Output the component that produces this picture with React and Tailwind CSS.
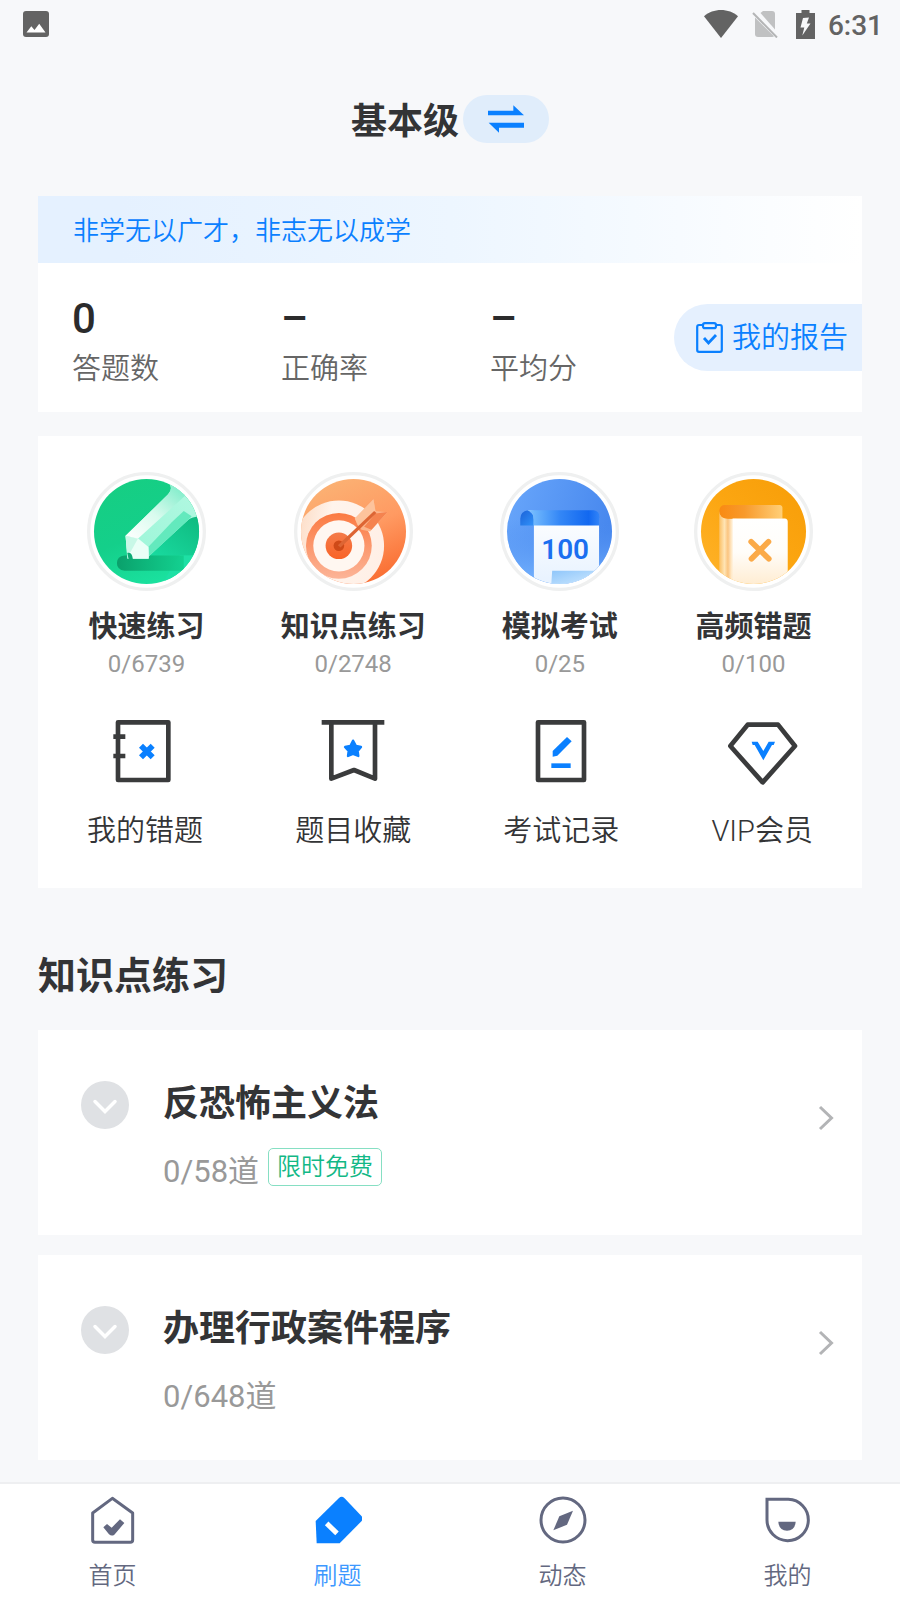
import React from "react";

function ImageIcon() {
  return (
    <svg className="size-[26px]" viewBox="0 0 26 26" aria-hidden="true">
      <rect width="26" height="26" rx="3" fill="#636363" />
      <path d="M3.5 21.5 L8.3 15.2 L11.5 19 L16.2 12.8 L22.5 21.5 Z" fill="#fff" />
    </svg>
  );
}

function WifiIcon() {
  return (
    <svg className="h-[28px] w-[34px]" viewBox="0 0 34 28" aria-hidden="true">
      <path d="M0 6.3 C9 -2 25 -2 34 6.3 L17 28 Z" fill="#636363" />
    </svg>
  );
}

function NoSimIcon() {
  return (
    <svg className="h-[28px] w-[26px]" viewBox="0 0 26 28" aria-hidden="true">
      <path d="M8.5 3 L11 1 H20 Q23 1 23 4 V19.5 Z" fill="#c0c1c2" />
      <path d="M3 7.5 L22 26.3 Q21.500 27 20 27 H6 Q3 27 3 24 Z" fill="#c0c1c2" />
      <path d="M1 3 L25 27.500" stroke="#b4b5b6" strokeWidth="2" />
    </svg>
  );
}

function BatteryIcon() {
  return (
    <svg className="h-[29px] w-[19px]" viewBox="0 0 19 29" aria-hidden="true">
      <path d="M5.500 0 H13.500 V3 H19 V29 H0 V3 H5.500 Z" fill="#636363" />
      <path d="M7 8 L13 7.500 L10.800 13.500 H14.500 L6.300 25.500 L8.300 17.500 H4.500 Z" fill="#f7f8fa" />
    </svg>
  );
}

function SwapIcon() {
  return (
    <svg className="h-[28px] w-[36px]" viewBox="0 0 108 84" aria-hidden="true">
      <path d="M0 17 H76 V1 L108 31 H0 Z" fill="#0a80ff" />
      <path d="M2 53 H108 V68 H33 V83 Z" fill="#0a80ff" />
    </svg>
  );
}

function ReportIcon() {
  return (
    <svg className="h-[31px] w-[27px]" viewBox="0 0 27 31" fill="none" stroke="#0a80ff" strokeWidth="2.200" aria-hidden="true">
      <path d="M7 3 H3 Q1.200 3 1.200 5 V28 Q1.200 29.800 3 29.800 H24 Q25.800 29.800 25.800 28 V5 Q25.800 3 24 3 H20" />
      <rect x="7" y="1.200" width="13" height="5" rx="2" />
      <path d="M8 16 L12.500 21 L20 13" strokeWidth="2.800" />
    </svg>
  );
}

function PencilBadge() {
  return (
    <svg className="size-[119px]" viewBox="81 37 358 358" aria-hidden="true">
      <defs>
        <clipPath id="pc"><circle cx="260" cy="216" r="158" /></clipPath>
        <linearGradient id="pb" x1="0.300" y1="0" x2="0.700" y2="1">
          <stop offset="0" stopColor="#16ce83" />
          <stop offset="0.500" stopColor="#14cf8a" />
          <stop offset="1" stopColor="#1be3a1" />
        </linearGradient>
        <linearGradient id="p1" x1="0" y1="1" x2="1" y2="0">
          <stop offset="0" stopColor="#ffffff" />
          <stop offset="0.450" stopColor="#d9fbee" />
          <stop offset="1" stopColor="#6eeac3" />
        </linearGradient>
        <linearGradient id="p2" x1="0" y1="1" x2="1" y2="0">
          <stop offset="0" stopColor="#9bf6d8" />
          <stop offset="1" stopColor="#b4f8e2" />
        </linearGradient>
        <linearGradient id="p3" x1="0" y1="0" x2="1" y2="0">
          <stop offset="0" stopColor="#0aa06b" />
          <stop offset="1" stopColor="#12cf8e" stopOpacity="0.900" />
        </linearGradient>
        <linearGradient id="p4" x1="0" y1="1" x2="1" y2="0">
          <stop offset="0" stopColor="#19dba0" />
          <stop offset="1" stopColor="#0fb97f" />
        </linearGradient>
      </defs>
      <circle cx="260" cy="216" r="174" fill="#fff" stroke="#eff0f0" strokeWidth="10" />
      <g clipPath="url(#pc)">
        <rect x="100" y="56" width="320" height="320" fill="url(#pb)" />
        <path d="M268 288 L386 181 Q400 165 425 175 V288 Z" fill="url(#p4)" />
        <path d="M360 288 H425 V390 H300 L330 334 Z" fill="#1ee0a5" />
        <path d="M194 288 H372 V334 H194 Q171 332 171 311 Q171 290 194 288 Z" fill="url(#p3)" />
        <path d="M197 229 L325 104 Q338 90 331 76 L440 60 V170 Q400 168 386 181 L268 290 L265 298 H202 Z" fill="url(#p2)" />
        <path d="M197 229 L325 104 Q338 90 331 76 L376 84 L390 96 L234 238 Z" fill="url(#p1)" />
        <path d="M336 188 L372 154 L396 170 L386 181 L268 290 L266 262 Z" fill="#63e9bd" />
        <path d="M197 229 L234 236 L266 263 L267 298 H204 Z" fill="#eafff7" />
        <path d="M202 280 Q216 276 219 299 H206 Z" fill="#0cab75" />
        <path d="M197 229 L234 238 L212 278 L201 279 Z" fill="#c8f8e7" />
      </g>
    </svg>
  );
}

function TargetBadge() {
  return (
    <svg className="size-[119px]" viewBox="699 37 358 358" aria-hidden="true">
      <defs>
        <clipPath id="tc"><circle cx="878" cy="216" r="158" /></clipPath>
        <linearGradient id="tb" x1="0.300" y1="0" x2="0.750" y2="1">
          <stop offset="0" stopColor="#fbb274" />
          <stop offset="0.500" stopColor="#ff9a62" />
          <stop offset="1" stopColor="#f96a2e" />
        </linearGradient>
        <linearGradient id="t1" x1="0" y1="0.400" x2="1" y2="0.600">
          <stop offset="0" stopColor="#fddcc5" />
          <stop offset="0.350" stopColor="#fff4ec" />
          <stop offset="1" stopColor="#ffefe6" />
        </linearGradient>
        <linearGradient id="t2" x1="0" y1="0" x2="0" y2="1">
          <stop offset="0" stopColor="#fb7a42" />
          <stop offset="1" stopColor="#fcb497" />
        </linearGradient>
        <linearGradient id="t3" x1="0" y1="0" x2="0" y2="1">
          <stop offset="0" stopColor="#f47b4a" />
          <stop offset="1" stopColor="#f96327" />
        </linearGradient>
      </defs>
      <circle cx="878" cy="216" r="174" fill="#fff" stroke="#eff0f0" strokeWidth="10" />
      <g clipPath="url(#tc)">
        <rect x="718" y="56" width="320" height="320" fill="url(#tb)" />
        <circle cx="834" cy="259" r="136" fill="url(#t1)" />
        <circle cx="834" cy="259" r="99" fill="url(#t2)" />
        <circle cx="834" cy="259" r="77" fill="#fff7f1" />
        <circle cx="834" cy="259" r="40" fill="url(#t3)" />
        <circle cx="834" cy="259" r="16" fill="#cf4a18" />
        <path d="M882 177 L938 119 L944 154 L980 158 L928 216 L902 211 L889 195 Z" fill="#fcb48a" />
        <path d="M910 202 L944 162 L980 157 L932 211 Z" fill="#f5834f" />
        <path d="M882 177 L938 119 L944 154 L893 200 Z" fill="#fdc39c" />
        <path d="M940 154 L947 160 L839 264 L831 257 Z" fill="#dd6534" />
      </g>
    </svg>
  );
}

function ExamBadge() {
  return (
    <svg className="size-[119px]" viewBox="88 37 358 358" aria-hidden="true">
      <defs>
        <clipPath id="ec"><circle cx="267" cy="216" r="158" /></clipPath>
        <linearGradient id="eb" x1="0" y1="0" x2="1" y2="0.300">
          <stop offset="0" stopColor="#69a7fb" />
          <stop offset="1" stopColor="#4888ee" />
        </linearGradient>
        <linearGradient id="e5" x1="0" y1="0" x2="0" y2="1">
          <stop offset="0" stopColor="#4888ee" stopOpacity="0" />
          <stop offset="1" stopColor="#78b6ff" />
        </linearGradient>
        <linearGradient id="e1" x1="0" y1="0" x2="1" y2="0">
          <stop offset="0" stopColor="#7fc4ff" />
          <stop offset="0.450" stopColor="#3487f6" />
          <stop offset="0.850" stopColor="#1268f0" />
          <stop offset="1" stopColor="#3284f8" />
        </linearGradient>
        <linearGradient id="e2" x1="0" y1="0" x2="1" y2="1">
          <stop offset="0" stopColor="#1b62d8" />
          <stop offset="1" stopColor="#3193fa" />
        </linearGradient>
        <linearGradient id="e3" x1="0" y1="0" x2="0" y2="1">
          <stop offset="0" stopColor="#ffffff" />
          <stop offset="1" stopColor="#e7f2ff" />
        </linearGradient>
        <linearGradient id="e4" x1="0" y1="0" x2="1" y2="1">
          <stop offset="0" stopColor="#8fc6fa" />
          <stop offset="1" stopColor="#d2ebff" />
        </linearGradient>
      </defs>
      <circle cx="267" cy="216" r="174" fill="#fff" stroke="#eff0f0" strokeWidth="10" />
      <g clipPath="url(#ec)">
        <rect x="107" y="56" width="320" height="320" fill="url(#eb)" />
        <rect x="107" y="180" width="320" height="196" fill="url(#e5)" />
        <path d="M172 152 Q149 155 149 178 V198 H192 V170 Z" fill="url(#e2)" />
        <path d="M170 152 Q190 153 190 180 V350 Q192 366 206 376 H400 L386 330 V175 Z" fill="url(#e3)" />
        <path d="M170 152 H370 Q387 154 387 172 V198 H189 V180 Q189 155 170 152 Z" fill="url(#e1)" />
        <path d="M245 334 H372 L360 347 H390 L360 378 H242 Z" fill="url(#e4)" />
        <text x="284" y="300" textAnchor="middle" fontSize="84" fontWeight="600" fontFamily="Roboto, sans-serif" fill="#1b6ff0">100</text>
      </g>
    </svg>
  );
}

function BookBadge() {
  return (
    <svg className="size-[119px]" viewBox="672 37 358 358" aria-hidden="true">
      <defs>
        <clipPath id="bc"><circle cx="851" cy="216" r="158" /></clipPath>
        <linearGradient id="bb" x1="1" y1="0" x2="0" y2="1">
          <stop offset="0" stopColor="#f79d08" />
          <stop offset="0.500" stopColor="#fca611" />
          <stop offset="1" stopColor="#ffb42c" />
        </linearGradient>
        <linearGradient id="b1" x1="0" y1="0" x2="1" y2="0">
          <stop offset="0" stopColor="#f98a12" />
          <stop offset="0.400" stopColor="#f89a2c" />
          <stop offset="1" stopColor="#ffcf77" />
        </linearGradient>
        <linearGradient id="b2" x1="0" y1="0" x2="0" y2="1">
          <stop offset="0" stopColor="#ffffff" />
          <stop offset="0.500" stopColor="#fffdf9" />
          <stop offset="1" stopColor="#ffecd0" />
        </linearGradient>
        <linearGradient id="b3" x1="0" y1="0" x2="1" y2="0">
          <stop offset="0" stopColor="#fbc065" />
          <stop offset="0.300" stopColor="#ffe4b4" />
          <stop offset="0.500" stopColor="#fbc47f" />
          <stop offset="0.700" stopColor="#ffe9c8" />
          <stop offset="1" stopColor="#fff0d8" />
        </linearGradient>
      </defs>
      <circle cx="851" cy="216" r="174" fill="#fff" stroke="#eff0f0" strokeWidth="10" />
      <g clipPath="url(#bc)">
        <rect x="691" y="56" width="320" height="320" fill="url(#bb)" />
        <path d="M748 152 Q750 176 775 177 H800 V378 H748 Z" fill="url(#b3)" />
        <path d="M762 136 H930 Q938 137 938 145 V178 H775 Q748 176 748 154 Q750 137 762 136 Z" fill="url(#b1)" />
        <path d="M788 177 H945 Q954 178 954 187 V380 H788 Z" fill="url(#b2)" />
        <path d="M844 247 L897 298 M896 247 L845 298" stroke="#fbaa48" strokeWidth="17" strokeLinecap="round" />
      </g>
    </svg>
  );
}

function WrongBookIcon() {
  return (
    <svg className="size-[72px]" viewBox="147 46 216 216" fill="none" stroke="#3a3b3c" strokeWidth="14" strokeLinejoin="round" aria-hidden="true">
      <rect x="174" y="68" width="151" height="173" />
      <path d="M160 111 H196 M160 169 H196" />
      <path d="M243 138 L278 173 M278 138 L243 173" stroke="#0a80ff" strokeWidth="17" />
    </svg>
  );
}

function FavoriteIcon() {
  return (
    <svg className="size-[72px]" viewBox="770 46 216 216" fill="none" stroke="#3a3b3c" strokeWidth="14" strokeLinejoin="round" aria-hidden="true">
      <path d="M784 68 H972" />
      <path d="M813 68 V237 L881 211 L944 237 V68" />
      <path d="M878 123 L887 139 L902 142 L892 154 L894 169 L878 163 L863 169 L865 154 L854 142 L870 139 Z" fill="#0a80ff" stroke="#0a80ff" strokeWidth="7" />
    </svg>
  );
}

function RecordIcon() {
  return (
    <svg className="size-[72px]" viewBox="166 46 216 216" fill="none" stroke="#3a3b3c" strokeWidth="14" strokeLinejoin="round" aria-hidden="true">
      <rect x="205" y="68" width="138" height="173" />
      <path d="M292 112 L306 125 L263 168 L249 171 V154 Z" fill="#0a80ff" stroke="none" />
      <path d="M245 198 H303" stroke="#0a80ff" />
    </svg>
  );
}

function VipIcon() {
  return (
    <svg className="size-[72px]" viewBox="768 46 216 216" fill="none" stroke="#3a3b3c" strokeWidth="14" strokeLinejoin="round" aria-hidden="true">
      <path d="M833 75 H924 L975 139 L878 248 L781 139 Z" />
      <path d="M845 126 H863 L880 154 L896 126 H915 L911 136 L906 136 L880 182 L854 136 H848 Z" fill="#0a80ff" stroke="none" />
    </svg>
  );
}

function ChevronBadge() {
  return (
    <svg className="size-[48px]" viewBox="0 0 48 48" aria-hidden="true">
      <circle cx="24" cy="24" r="24" fill="#dfe1e4" />
      <path d="M14 20.500 L24 30.500 L34 20.500" fill="none" stroke="#fff" strokeWidth="3.500" strokeLinecap="round" />
    </svg>
  );
}

function ChevronRight() {
  return (
    <svg className="h-[26px] w-[16px]" viewBox="0 0 16 26" aria-hidden="true">
      <path d="M2 2 L13.500 13 L2 24" fill="none" stroke="#b3b4b6" strokeWidth="3" />
    </svg>
  );
}

function HomeIcon() {
  return (
    <svg className="size-[48px]" viewBox="268 76 144 144" aria-hidden="true">
      <path d="M338 83 L399 127 V208 Q399 215 392 215 H286 Q279 215 279 208 V127 Z" fill="none" stroke="#636880" strokeWidth="9" strokeLinejoin="round" />
      <path d="M311 170 L322 160 L336 171 L361 146 L374 157 L344 192 Q336 198 328 191 Z" fill="#636880" />
    </svg>
  );
}

function PracticeIcon() {
  return (
    <svg className="size-[48px]" viewBox="941 76 144 144" aria-hidden="true">
      <path d="M946 151 L1016 82 Q1024 75 1032 82 L1084 137 Q1090 144 1084 151 L1018 218 H949 Z" fill="#0a80ff" />
      <path d="M979 158 L1010 188" stroke="#fff" strokeWidth="15" />
    </svg>
  );
}

function CompassIcon() {
  return (
    <svg className="size-[48px]" viewBox="266 76 144 144" aria-hidden="true">
      <circle cx="338" cy="148" r="66" fill="none" stroke="#636880" strokeWidth="9" />
      <path d="M368 120 L350 162 L309 179 L327 137 Z" fill="#636880" />
    </svg>
  );
}

function ProfileIcon() {
  return (
    <svg className="size-[48px]" viewBox="941 76 144 144" aria-hidden="true">
      <path d="M950 86 H1014 A62 62 0 1 1 950 148 Z" fill="none" stroke="#636880" strokeWidth="9" />
      <path d="M984 153 H1036 Q1034 180 1010 180 Q986 180 984 153 Z" fill="#636880" />
    </svg>
  );
}

const stats = [
  { value: "0", label: "答题数" },
  { value: "–", label: "正确率" },
  { value: "–", label: "平均分" },
];

const practices = [
  { Icon: PencilBadge, label: "快速练习", count: "0/6739" },
  { Icon: TargetBadge, label: "知识点练习", count: "0/2748" },
  { Icon: ExamBadge, label: "模拟考试", count: "0/25" },
  { Icon: BookBadge, label: "高频错题", count: "0/100" },
];

const tools = [
  { Icon: WrongBookIcon, label: "我的错题" },
  { Icon: FavoriteIcon, label: "题目收藏" },
  { Icon: RecordIcon, label: "考试记录" },
  { Icon: VipIcon, label: "VIP会员" },
];

const chapters = [
  { title: "反恐怖主义法", count: "0/58道", tag: "限时免费" },
  { title: "办理行政案件程序", count: "0/648道" },
];

const tabs = [
  { Icon: HomeIcon, label: "首页" },
  { Icon: PracticeIcon, label: "刷题", active: true },
  { Icon: CompassIcon, label: "动态" },
  { Icon: ProfileIcon, label: "我的" },
];

export default function App() {
  return (
    <div className="flex h-screen flex-col bg-[#f7f8fa] font-[Roboto,'Noto_Sans_CJK_SC',sans-serif] text-[#333436]">
      <div className="flex h-12 shrink-0 items-center justify-between pr-[17px] pl-[23px]">
        <ImageIcon />
        <div className="flex items-center gap-[14px]">
          <WifiIcon />
          <NoSimIcon />
          <div className="flex items-center gap-[13px] pl-1">
            <BatteryIcon />
            <span className="pt-[3px] text-[28px] leading-[32px] font-medium text-[#636363]">6:31</span>
          </div>
        </div>
      </div>

      <header className="flex h-[142px] shrink-0 items-center justify-center gap-1">
        <h1 className="pt-[6px] text-[36px] leading-[48px] font-bold">基本级</h1>
        <button type="button" aria-label="切换" className="flex h-[48px] w-[86px] items-center justify-center rounded-full bg-[#e0edfb]">
          <SwapIcon />
        </button>
      </header>

      <main className="flex min-h-0 flex-1 flex-col overflow-y-auto px-[38px] pt-[6px] [scrollbar-width:none]">
        <section className="shrink-0 bg-white">
          <p className="bg-linear-to-r from-[#e5f1ff] from-10% via-[#edf6ff] via-50% to-white px-[35px] pt-[17px] pb-[13px] text-[26px] leading-[37px] font-[350] text-[#0a80ff]">
            非学无以广才，非志无以成学
          </p>
          <div className="flex items-center justify-between pl-[34px]">
            <dl className="flex gap-[122px] pt-[29px] pb-[22px]">
              {stats.map((s) => (
                <div key={s.label} className="flex w-[87px] flex-col-reverse">
                  <dt className="pt-[3px] text-[29px] leading-[42px] font-[350] whitespace-nowrap text-[#666]">{s.label}</dt>
                  <dd className="text-[42px] leading-[53px] font-medium text-[#2b2b2c]">{s.value}</dd>
                </div>
              ))}
            </dl>
            <button type="button" className="flex h-[67px] w-[188px] shrink-0 items-center gap-[9px] rounded-l-full bg-[#e5f0fe] pl-[22px] text-[29px] font-[350] text-[#0a80ff]">
              <ReportIcon />
              <span className="pt-[2px] whitespace-nowrap">我的报告</span>
            </button>
          </div>
        </section>

        <section className="mt-6 shrink-0 bg-white px-[49px] pt-[36px] pb-[37px]">
          <div className="flex justify-between">
            {practices.map(({ Icon, label, count }) => (
              <a key={label} href="#practice" className="flex flex-col items-center">
                <Icon />
                <span className="mt-[16px] text-[29px] leading-[40px] font-bold">{label}</span>
                <span className="mt-[1px] text-[24px] leading-[32px] text-[#999]">{count}</span>
              </a>
            ))}
          </div>
          <div className="mt-[35px] flex justify-between">
            {tools.map(({ Icon, label }) => (
              <a key={label} href="#tools" className="flex flex-col items-center">
                <Icon />
                <span className="mt-[24px] text-[29px] leading-[40px] font-[350]">{label}</span>
              </a>
            ))}
          </div>
        </section>

        <h2 className="mt-[61px] mb-[27px] shrink-0 text-[38px] leading-[54px] font-bold">知识点练习</h2>

        <ul className="flex flex-col gap-5">
          {chapters.map((c) => (
            <li key={c.title} className="flex h-[205px] items-center bg-white pr-[28px] pl-[43px]">
              <button type="button" aria-label="展开" className="-mt-[55px] shrink-0">
                <ChevronBadge />
              </button>
              <div className="ml-[34px] flex flex-1 flex-col gap-[18px] pt-[5px]">
                <h3 className="text-[36px] leading-[52px] font-bold">{c.title}</h3>
                <div className="flex h-[44px] items-start gap-[9px]">
                  <span className="pt-[2px] text-[31px] leading-[44px] text-[#999]">{c.count}</span>
                  {c.tag && (
                    <span className="rounded-[5px] border border-[#86dfc3] px-2 text-[24px] leading-[36px] font-[350] text-[#12b886]">{c.tag}</span>
                  )}
                </div>
              </div>
              <a href="#chapter" aria-label={c.title} className="mt-[-30px]">
                <ChevronRight />
              </a>
            </li>
          ))}
        </ul>
      </main>

      <nav className="grid h-[118px] shrink-0 grid-cols-4 border-t-2 border-[#eeeff1] bg-white">
        {tabs.map(({ Icon, label, active }) => (
          <a key={label} href="#tab" className={active ? "flex flex-col items-center pt-[12px] text-[#3d98ff]" : "flex flex-col items-center pt-[12px] text-[#636880]"}>
            <Icon />
            <span className="mt-[15px] text-[24px] leading-[34px] font-[350]">{label}</span>
          </a>
        ))}
      </nav>
    </div>
  );
}
